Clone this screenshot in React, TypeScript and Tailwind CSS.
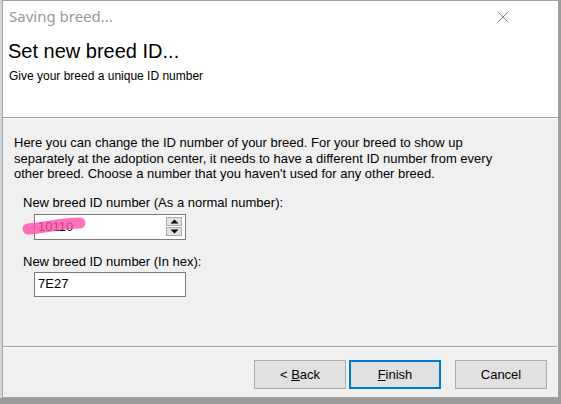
import React from "react";

const ui = { fontFamily: '"Liberation Sans", Arial, sans-serif' };
const title = { fontFamily: '"Noto Sans", "Open Sans", sans-serif' };

function Spinner() {
  return (
    <div className="flex flex-col gap-px pr-[3px]">
      <div className="flex h-[9px] w-[16px] items-center justify-center border border-[#acacac] bg-[#e1e1e1]">
        <svg width="9" height="5" viewBox="0 0 9 5">
          <path d="M0.5 4.5 L4.5 0.5 L8.5 4.5 Z" fill="#000" />
        </svg>
      </div>
      <div className="flex h-[9px] w-[16px] items-center justify-center border border-[#acacac] bg-[#e1e1e1]">
        <svg width="9" height="5" viewBox="0 0 9 5">
          <path d="M0.5 0.5 L4.5 4.5 L8.5 0.5 Z" fill="#000" />
        </svg>
      </div>
    </div>
  );
}

function Button({
  children,
  primary,
}: {
  children: React.ReactNode;
  primary?: boolean;
}) {
  return (
    <div
      className={
        "flex h-[29px] w-[92px] items-center justify-center bg-[#e1e1e1] text-[13px] text-black " +
        (primary ? "border-2 border-[#0078d7]" : "border border-[#adadad]")
      }
    >
      {children}
    </div>
  );
}

export default function App() {
  return (
    <div className="h-[404px] w-[561px] overflow-hidden bg-[#9c9c9c]" style={ui}>
      <div className="flex h-[398px] w-[559px] bg-[#d6d6d6] pl-[2px]">
        <div className="flex h-[398px] w-[557px] flex-col border border-[#a3a3a3] bg-[#f0f0f0]">
          {/* title bar + header */}
          <div className="h-[116px] bg-white">
            <div className="flex h-[31px] items-center justify-between pl-[6px] pr-[49px]">
              <span className="text-[15px] text-[#999999]" style={title}>
                Saving breed...
              </span>
              <svg width="12" height="12" viewBox="0 0 12 12">
                <path d="M0.5 0.5 L11.5 11.5 M11.5 0.5 L0.5 11.5" stroke="#8a8a8a" strokeWidth="1" />
              </svg>
            </div>
            <div className="pl-[5px] pt-[7px] text-[20px] leading-[24px] text-black">
              Set new breed ID...
            </div>
            <div className="pl-[6px] pt-[5px] text-[12px] leading-[16px] text-black">
              Give your breed a unique ID number
            </div>
          </div>
          <div className="h-px bg-[#a0a0a0]" />
          <div className="h-px bg-white" />

          {/* body */}
          <div className="flex h-[227px] flex-col pl-[11px] pt-[16px] text-[13px] text-black">
            <p className="whitespace-nowrap leading-[15.5px]">
              Here you can change the ID number of your breed. For your breed to show up
              <br />
              separately at the adoption center, it needs to have a different ID number from every
              <br />
              other breed. Choose a number that you haven't used for any other breed.
            </p>
            <div className="mt-[13px] pl-[9px] leading-[15px]">
              New breed ID number (As a normal number):
            </div>
            <div className="relative ml-[20px] mt-[4px] flex h-[26px] w-[152px] items-center justify-between border border-[#7a7a7a] bg-white pl-[3px]">
              <span>10110</span>
              <Spinner />
              <svg
                className="absolute left-[-13px] top-[2px]"
                width="66"
                height="18"
                viewBox="0 0 66 18"
              >
                <path
                  d="M6 12 C 22 11, 40 6, 58 6"
                  stroke="#ff4faa"
                  strokeOpacity="0.8"
                  strokeWidth="11"
                  strokeLinecap="round"
                  fill="none"
                />
              </svg>
            </div>
            <div className="mt-[14px] pl-[9px] leading-[15px]">
              New breed ID number (In hex):
            </div>
            <div className="ml-[20px] mt-[3px] flex h-[25px] w-[152px] items-center border border-[#7a7a7a] bg-white pl-[3px]">
              7E27
            </div>
          </div>

          <div className="mr-[1px] h-px bg-[#a0a0a0]" />
          <div className="mr-[1px] h-px bg-white" />

          <div className="flex flex-1 items-start pl-[251px] pt-[12px]">
            <Button>
              &lt;&nbsp;<span className="underline">B</span>ack
            </Button>
            <div className="ml-[3px]">
              <Button primary>
                <span className="underline">F</span>inish
              </Button>
            </div>
            <div className="ml-[14px]">
              <Button>Cancel</Button>
            </div>
          </div>
        </div>
      </div>
    </div>
  );
}
